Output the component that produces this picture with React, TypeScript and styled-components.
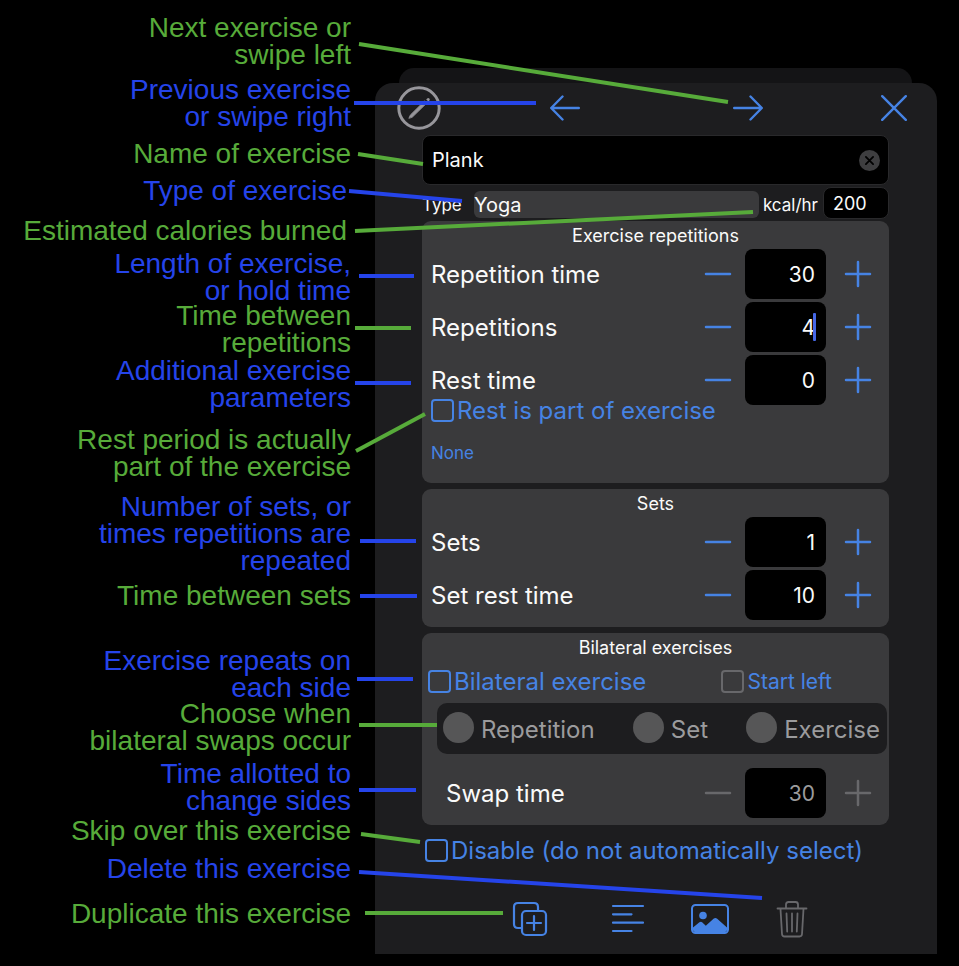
import React from "react";
import styled, { createGlobalStyle, css } from "styled-components";

const color = {
  green: "#57ab3a",
  blue: "#2544ea",
  accent: "#4683e4",
  panel: "#1d1d1f",
  card: "#3a3a3c",
  white: "#fafafa",
  muted: "#9b9b9d",
  disabled: "#68686b",
};

const GlobalStyle = createGlobalStyle`
  *, *::before, *::after { box-sizing: border-box; }
  body { margin: 0; background: #000; }
  button, input, select { font: inherit; color: inherit; margin: 0; }
`;

/* ---------- page ---------- */

const Page = styled.div`
  position: relative;
  display: grid;
  grid-template-columns: 375fr 562fr 22fr;
  min-height: 966px;
  overflow: hidden;
  background: #000;
  font-family: Inter, "Liberation Sans", sans-serif;
`;

const Notes = styled.ul`
  display: grid;
  grid-template-rows: 62px 64px 37px 40px 33px 52px 55px 69px 67px 89px 65px 53px 60px 57px 38px 45px 27px;
  margin: 0;
  padding: 14px 24px 0 0;
  list-style: none;
  align-content: start;
  font: 28px/27px "Liberation Sans", Arial, sans-serif;
  text-align: right;
  white-space: nowrap;
`;

const Note = styled.li<{ $tone: "green" | "blue"; $inset?: boolean }>`
  color: ${(p) => color[p.$tone]};
  padding-right: ${(p) => (p.$inset ? "4px" : "0")};
`;

const NoteLine = styled.span`
  display: block;
`;

const Leaders = styled.svg`
  position: absolute;
  inset: 0;
  width: 100%;
  height: 966px;
  pointer-events: none;
  stroke-width: 4;

  line { vector-effect: non-scaling-stroke; }
`;

/* ---------- sheet ---------- */

const Stack = styled.div`
  display: flex;
  flex-direction: column;
  padding-top: 68px;
`;

const BackSheet = styled.div`
  height: 15px;
  margin: 0 25px 0 24px;
  border-radius: 15px 15px 0 0;
  background: #141416;
`;

const Sheet = styled.form`
  display: flex;
  flex-direction: column;
  padding-bottom: 15px;
  border-radius: 18px 18px 0 0;
  background: ${color.panel};
  color: ${color.white};
`;

const Header = styled.header`
  display: flex;
  align-items: center;
  height: 50px;
`;

const HeaderSide = styled.div`
  display: flex;
  justify-content: center;
  width: 87px;
`;

const HeaderNav = styled.nav`
  display: flex;
  flex: 1;
  justify-content: center;
  gap: 153px;
`;

const IconButton = styled.button`
  display: flex;
  align-items: center;
  justify-content: center;
  padding: 0;
  border: 0;
  background: none;
  color: ${color.accent};

  &:disabled { color: ${color.disabled}; }
  svg { display: block; fill: none; stroke: currentColor; stroke-linecap: round; stroke-linejoin: round; }
`;

const Body = styled.div`
  display: flex;
  flex-direction: column;
  margin: 0 48px 0 47px;
`;

const field = css`
  border: 1px solid #29292b;
  border-radius: 8px;
  background: #000;
  outline: 0;
`;

const NameField = styled.div`
  ${field}
  display: flex;
  align-items: center;
  height: 50px;
  margin-top: 2px;
  padding: 0 8px 0 9px;
`;

const NameInput = styled.input`
  flex: 1;
  min-width: 0;
  padding: 0;
  border: 0;
  outline: 0;
  background: none;
  font-size: 20px;
`;

const TypeRow = styled.div`
  display: flex;
  align-items: center;
  height: 32px;
  margin: 2px 0;
  font-size: 17px;
`;

const TypeLabel = styled.label`
  width: 52px;
  padding-top: 3px;
`;

const TypeSelect = styled.select`
  flex: 1;
  min-width: 0;
  height: 27px;
  margin-top: 3px;
  padding: 0;
  border: 0;
  border-radius: 6px;
  background: ${color.card};
  appearance: none;
  font-size: 20px;
`;

const RateLabel = styled.label`
  padding: 3px 5px 0 4px;
`;

const RateInput = styled.input`
  ${field}
  width: 66px;
  height: 32px;
  padding: 0 9px;
  font-size: 18px;
`;

const Card = styled.fieldset<{ $space?: number }>`
  display: flex;
  flex-direction: column;
  min-width: 0;
  margin: 0 0 6px;
  padding: 0 0 ${(p) => p.$space ?? 7}px;
  border: 0;
  border-radius: 9px;
  background: ${color.card};
`;

const CardTitle = styled.h2`
  margin: 0;
  padding-top: 5px;
  font-size: 18px;
  font-weight: 400;
  line-height: 20px;
  text-align: center;
`;

const Steppers = styled.div`
  display: flex;
  flex-direction: column;
  gap: 3px;
  padding-top: 3px;
`;

const StepRow = styled.div<{ $indent?: boolean }>`
  display: grid;
  grid-template-columns: 1fr 54px 81px 63px;
  align-items: stretch;
  height: 50px;
  padding-left: ${(p) => (p.$indent ? 24 : 9)}px;
`;

const StepLabel = styled.label`
  align-self: center;
  font-size: 24px;
`;

const StepField = styled.div`
  position: relative;
  display: flex;
`;

const StepInput = styled.input`
  ${field}
  width: 100%;
  border: 0;
  padding: 0 11px;
  font-size: 21px;
  text-align: right;

  &:disabled { color: ${color.muted}; }
`;

const Caret = styled.span`
  position: absolute;
  top: 11px;
  right: 10px;
  width: 3px;
  height: 28px;
  border-radius: 1px;
  background: #4668e6;
`;

const CheckRow = styled.div<{ $kind: "rest" | "bilateral" | "disable" }>`
  display: flex;
  align-items: center;
  height: 24px;
  ${(p) => p.$kind === "rest" && "margin: -7px 9px 0;"}
  ${(p) => p.$kind === "bilateral" && "margin: 11px 57px 10px 6px; justify-content: space-between;"}
  ${(p) => p.$kind === "disable" && "margin: 7px 0 0 3px;"}
`;

const CheckLabel = styled.label<{ $small?: boolean }>`
  display: flex;
  align-items: center;
  gap: 3px;
  color: ${color.accent};
  font-size: ${(p) => (p.$small ? 21 : 24)}px;
  white-space: nowrap;
`;

const CheckBox = styled.input`
  flex: none;
  width: 23px;
  height: 23px;
  border: 2px solid ${color.accent};
  border-radius: 4px;
  appearance: none;

  &:disabled { border-color: ${color.disabled}; }
`;

const ExtraButton = styled.button`
  align-self: flex-start;
  margin: 21px 9px 0;
  padding: 0;
  border: 0;
  background: none;
  color: ${color.accent};
  font-size: 17px;
  line-height: 20px;
`;

const RadioGroup = styled.div`
  display: flex;
  align-items: center;
  justify-content: space-between;
  height: 51px;
  margin: 0 2px 11px 15px;
  padding: 0 7px 2px 6px;
  border-radius: 10px;
  background: ${color.panel};
`;

const RadioLabel = styled.label`
  display: flex;
  align-items: center;
  gap: 7px;
  color: ${color.muted};
  font-size: 24px;
  line-height: 28px;
`;

const RadioText = styled.span`
  padding-top: 4px;
`;

const Radio = styled.input`
  width: 31px;
  height: 31px;
  margin: 0;
  border-radius: 50%;
  background: #565657;
  appearance: none;
`;

const Toolbar = styled.footer`
  display: flex;
  align-items: center;
  justify-content: space-between;
  margin: 37px 129px 0 137px;
  height: 40px;

  ${IconButton}:first-child { margin-right: 16px; }
`;

/* ---------- data ---------- */

type NoteData = { tone: "green" | "blue"; lines: string[]; from: [number, number]; to: [number, number]; inset?: boolean };

const notes: NoteData[] = [
  { tone: "green", lines: ["Next exercise or", "swipe left"], from: [359, 44], to: [728, 102] },
  { tone: "blue", lines: ["Previous exercise", "or swipe right"], from: [354, 103], to: [536, 103] },
  { tone: "green", lines: ["Name of exercise"], from: [358, 154], to: [423, 164] },
  { tone: "blue", lines: ["Type of exercise"], from: [349, 191], to: [462, 201], inset: true },
  { tone: "green", lines: ["Estimated calories burned"], from: [355, 231], to: [753, 212], inset: true },
  { tone: "blue", lines: ["Length of exercise,", "or hold time"], from: [359, 276], to: [414, 276] },
  { tone: "green", lines: ["Time between", "repetitions"], from: [355, 328], to: [411, 328] },
  { tone: "blue", lines: ["Additional exercise", "parameters"], from: [355, 383], to: [411, 383] },
  { tone: "green", lines: ["Rest period is actually", "part of the exercise"], from: [356, 451], to: [425, 414] },
  { tone: "blue", lines: ["Number of sets, or", "times repetitions are", "repeated"], from: [360, 541], to: [416, 541] },
  { tone: "green", lines: ["Time between sets"], from: [360, 596], to: [417, 596] },
  { tone: "blue", lines: ["Exercise repeats on", "each side"], from: [357, 679], to: [413, 679] },
  { tone: "green", lines: ["Choose when", "bilateral swaps occur"], from: [359, 725], to: [437, 725] },
  { tone: "blue", lines: ["Time allotted to", "change sides"], from: [359, 790], to: [416, 790] },
  { tone: "green", lines: ["Skip over this exercise"], from: [361, 834], to: [420, 842] },
  { tone: "blue", lines: ["Delete this exercise"], from: [359, 872], to: [762, 898] },
  { tone: "green", lines: ["Duplicate this exercise"], from: [365, 913], to: [503, 913] },
];

/* The leader beside "Time between sets" is drawn in blue, unlike its caption. */
const leaderTone = (n: NoteData) => (n.lines[0] === "Time between sets" ? color.blue : color[n.tone]);

/* ---------- parts ---------- */

type StepperProps = { id: string; label: string; value: string; disabled?: boolean; indent?: boolean; caret?: boolean };

function Stepper({ id, label, value, disabled, indent, caret }: StepperProps) {
  return (
    <StepRow $indent={indent}>
      <StepLabel htmlFor={id}>{label}</StepLabel>
      <IconButton type="button" aria-label={`Decrease ${label}`} disabled={disabled}>
        <svg width="28" height="28" strokeWidth="2.5"><path d="M2 14H26" /></svg>
      </IconButton>
      <StepField>
        <StepInput id={id} inputMode="numeric" defaultValue={value} disabled={disabled} />
        {caret && <Caret />}
      </StepField>
      <IconButton type="button" aria-label={`Increase ${label}`} disabled={disabled}>
        <svg width="28" height="28" strokeWidth="2.5"><path d="M2 14H26M14 2V26" /></svg>
      </IconButton>
    </StepRow>
  );
}

type CheckProps = { label: string; disabled?: boolean; small?: boolean };

function Check({ label, disabled, small }: CheckProps) {
  return (
    <CheckLabel $small={small}>
      <CheckBox type="checkbox" disabled={disabled} />
      {label}
    </CheckLabel>
  );
}

export default function App() {
  return (
    <>
      <GlobalStyle />
      <Page>
        <Notes>
          {notes.map((n) => (
            <Note key={n.lines[0]} $tone={n.tone} $inset={n.inset}>
              {n.lines.map((l) => <NoteLine key={l}>{l}</NoteLine>)}
            </Note>
          ))}
        </Notes>

        <Stack>
          <BackSheet />
          <Sheet>
            <Header>
              <HeaderSide>
                <IconButton type="button" aria-label="Edit">
                  <svg width="44" height="44" viewBox="0 0 44 44">
                    <circle cx="22" cy="22" r="20.2" stroke="#97969b" strokeWidth="3" />
                    <path d="M12 32L13.4 28.9L27.6 14.9L29.8 17.1L15.4 31.1Z" fill="#97969b" stroke="#97969b" strokeWidth="0.8" />
                    <path d="M29.2 13.4L30.2 12.4Q31.3 11.5 32.3 12.5Q33.3 13.5 32.4 14.6L31.4 15.6Z" fill="#97969b" stroke="none" />
                  </svg>
                </IconButton>
              </HeaderSide>
              <HeaderNav>
                <IconButton type="button" aria-label="Previous exercise">
                  <svg width="30" height="26" strokeWidth="2.4"><path d="M28.8 13H1.5M12.5 1.5L1.2 13L12.5 24.5" /></svg>
                </IconButton>
                <IconButton type="button" aria-label="Next exercise">
                  <svg width="30" height="26" strokeWidth="2.4"><path d="M1.2 13H28.5M17.5 1.5L28.8 13L17.5 24.5" /></svg>
                </IconButton>
              </HeaderNav>
              <HeaderSide>
                <IconButton type="button" aria-label="Close">
                  <svg width="26" height="26" strokeWidth="2.4"><path d="M1.2 1.2L24.8 24.8M24.8 1.2L1.2 24.8" /></svg>
                </IconButton>
              </HeaderSide>
            </Header>

            <Body>
              <NameField>
                <NameInput aria-label="Exercise name" defaultValue="Plank" />
                <IconButton type="button" aria-label="Clear name">
                  <svg width="21" height="21">
                    <circle cx="10.5" cy="10.5" r="10.5" fill="#3e3e40" stroke="none" />
                    <path d="M6.9 6.9L14.1 14.1M14.1 6.9L6.9 14.1" stroke="#000" strokeWidth="1.8" />
                  </svg>
                </IconButton>
              </NameField>

              <TypeRow>
                <TypeLabel htmlFor="type">Type</TypeLabel>
                <TypeSelect id="type"><option>Yoga</option></TypeSelect>
                <RateLabel htmlFor="rate">kcal/hr</RateLabel>
                <RateInput id="rate" inputMode="numeric" defaultValue="200" />
              </TypeRow>

              <Card $space={20}>
                <CardTitle>Exercise repetitions</CardTitle>
                <Steppers>
                  <Stepper id="rep-time" label="Repetition time" value="30" />
                  <Stepper id="reps" label="Repetitions" value="4" caret />
                  <Stepper id="rest" label="Rest time" value="0" />
                </Steppers>
                <CheckRow $kind="rest"><Check label="Rest is part of exercise" /></CheckRow>
                <ExtraButton type="button">None</ExtraButton>
              </Card>

              <Card>
                <CardTitle>Sets</CardTitle>
                <Steppers>
                  <Stepper id="sets" label="Sets" value="1" />
                  <Stepper id="set-rest" label="Set rest time" value="10" />
                </Steppers>
              </Card>

              <Card>
                <CardTitle>Bilateral exercises</CardTitle>
                <CheckRow $kind="bilateral">
                  <Check label="Bilateral exercise" />
                  <Check label="Start left" disabled small />
                </CheckRow>
                <RadioGroup role="radiogroup" aria-label="Swap sides after">
                  {["Repetition", "Set", "Exercise"].map((r) => (
                    <RadioLabel key={r}>
                      <Radio type="radio" name="swap" disabled />
                      <RadioText>{r}</RadioText>
                    </RadioLabel>
                  ))}
                </RadioGroup>
                <Steppers>
                  <Stepper id="swap-time" label="Swap time" value="30" disabled indent />
                </Steppers>
              </Card>

              <CheckRow $kind="disable"><Check label="Disable (do not automatically select)" /></CheckRow>
            </Body>

            <Toolbar>
              <IconButton type="button" aria-label="Duplicate">
                <svg width="36" height="36" strokeWidth="2.2">
                  <path d="M9 27H6Q2 27 2 23V6Q2 2 6 2H22Q26 2 26 6V9" />
                  <rect x="10" y="10" width="24" height="24" rx="4" />
                  <path d="M22 15V29M15 22H29" />
                </svg>
              </IconButton>
              <IconButton type="button" aria-label="Notes">
                <svg width="34" height="36" strokeWidth="2.2"><path d="M2 5H32M2 13.3H20.5M2 21.7H32M2 30H20.5" /></svg>
              </IconButton>
              <IconButton type="button" aria-label="Picture">
                <svg width="38" height="32">
                  <rect x="1" y="2" width="36" height="28" rx="3.5" strokeWidth="2" />
                  <path d="M2 24.5L8.4 19.3Q10 18.3 11.4 19.5L14.8 22.7L22.8 15.6Q24.5 14.4 26.2 15.7L36 24.5V27Q36 29 34 29H4Q2 29 2 27Z" fill="currentColor" stroke="none" />
                  <circle cx="12" cy="12.5" r="3.8" fill="currentColor" stroke="none" />
                </svg>
              </IconButton>
              <IconButton type="button" aria-label="Delete" disabled>
                <svg width="32" height="38" strokeWidth="1.8">
                  <path d="M1.5 8.5H30.5M10 8V4.5Q10 2 12.5 2H19.5Q22 2 22 4.5V8M4.5 9L6 34Q6.2 36.5 8.5 36.5H23.5Q25.8 36.5 26 34L27.5 9M10.5 13.5L11.2 31.5M16 13.5V31.5M21.5 13.5L20.8 31.5" />
                </svg>
              </IconButton>
            </Toolbar>
          </Sheet>
        </Stack>

        <Leaders viewBox="0 0 959 966" preserveAspectRatio="none" aria-hidden="true">
          {notes.map((n) => (
            <line key={n.lines[0]} x1={n.from[0]} y1={n.from[1]} x2={n.to[0]} y2={n.to[1]} stroke={leaderTone(n)} />
          ))}
        </Leaders>
      </Page>
    </>
  );
}
